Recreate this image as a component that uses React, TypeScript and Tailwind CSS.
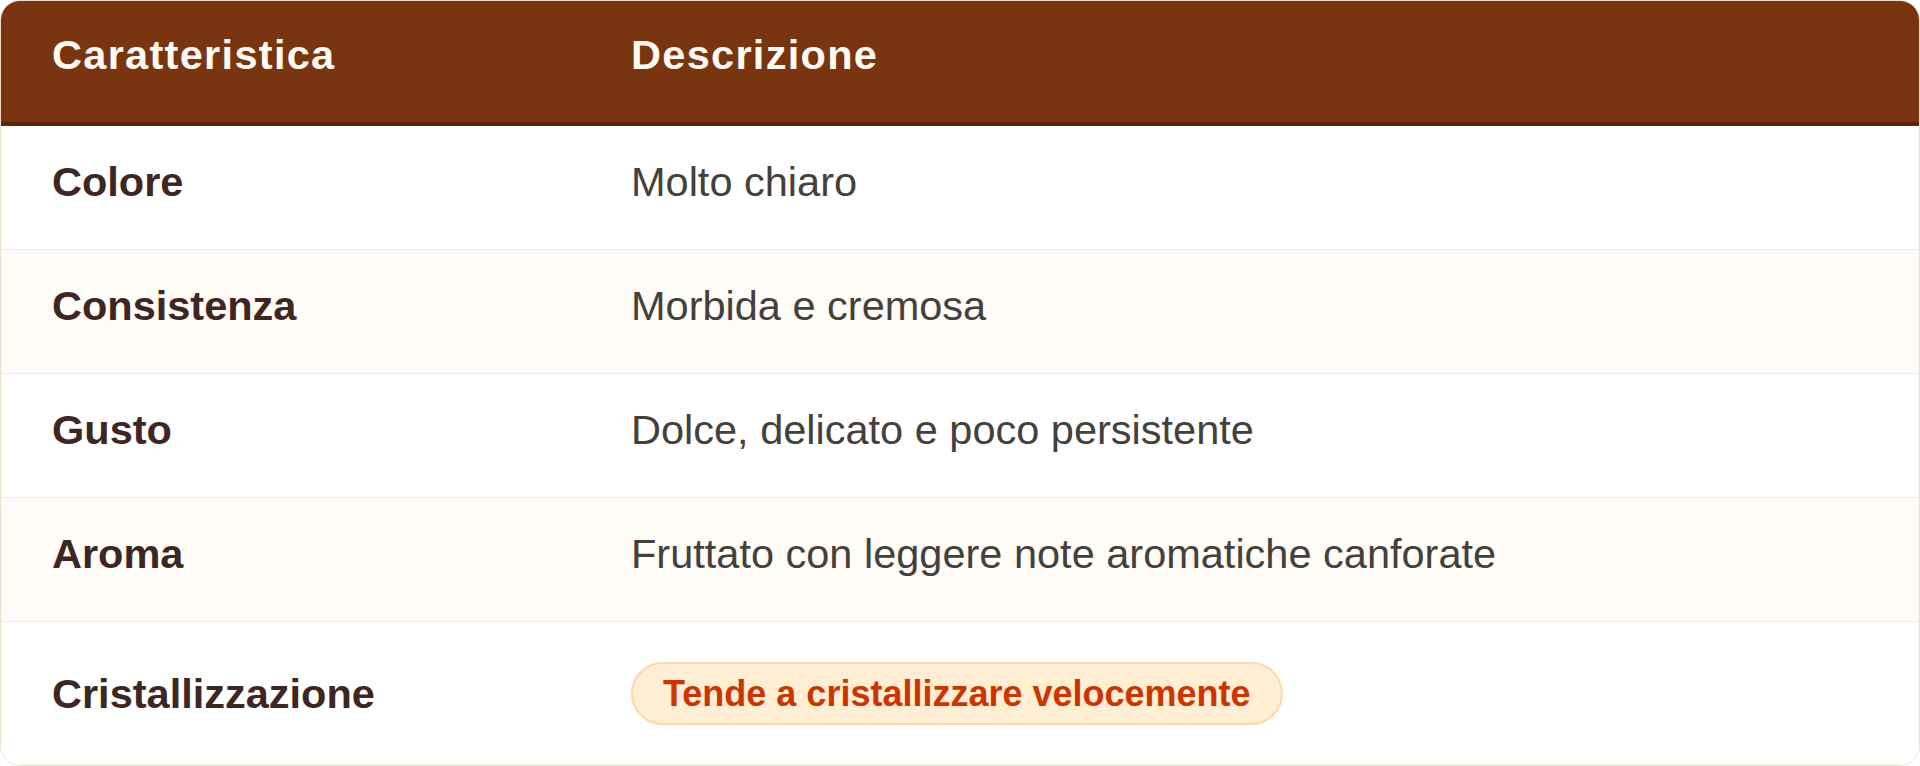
import React from 'react';

interface Row {
    label: string;
    value: string;
    badge?: boolean;
}

const rows: Row[] = [
    { label: 'Colore', value: 'Molto chiaro' },
    { label: 'Consistenza', value: 'Morbida e cremosa' },
    { label: 'Gusto', value: 'Dolce, delicato e poco persistente' },
    { label: 'Aroma', value: 'Fruttato con leggere note aromatiche canforate' },
    { label: 'Cristallizzazione', value: 'Tende a cristallizzare velocemente', badge: true },
];

export default function App() {
    return (
        <div className="w-[1920px] h-[766px] bg-white font-['Liberation_Sans',Arial,sans-serif]">
            <div className="h-full rounded-[20px] border border-[#ecdfcd] overflow-hidden bg-white">
                <table className="w-full table-fixed border-collapse">
                    <colgroup>
                        <col className="w-[580px]" />
                        <col />
                    </colgroup>
                    <thead>
                        <tr className="bg-[#78350f] border-b-4 border-[#5c2609]">
                            <th className="text-left px-[51px] pt-[30px] pb-[43px] text-[41.5px] leading-[48px] font-bold tracking-[1.3px] text-[#fffaf3]">
                                Caratteristica
                            </th>
                            <th className="text-left pl-[50px] pr-[51px] pt-[30px] pb-[43px] text-[41.5px] leading-[48px] font-bold tracking-[1.3px] text-[#fffaf3]">
                                Descrizione
                            </th>
                        </tr>
                    </thead>
                    <tbody>
                        {rows.map((row, i) => (
                            <tr
                                key={row.label}
                                className={`${i % 2 === 1 ? 'bg-[#fffbf7]' : 'bg-white'} ${
                                    i < rows.length - 1 ? 'border-b border-[#f1e7dc]' : ''
                                }`}
                            >
                                <td
                                    className={`px-[51px] ${
                                        row.badge ? 'pt-[40px] pb-[40px]' : 'pt-[32px] pb-[43px]'
                                    } text-[41.5px] leading-[48px] font-bold text-[#3e2723] align-middle`}
                                >
                                    {row.label}
                                </td>
                                <td
                                    className={`pl-[50px] pr-[51px] ${
                                        row.badge ? 'pt-[40px] pb-[40px]' : 'pt-[32px] pb-[43px]'
                                    } text-[41.5px] leading-[48px] text-stone-700 align-middle`}
                                >
                                    {row.badge ? (
                                        <span className="inline-block align-middle rounded-full border-2 border-orange-200 bg-orange-100 px-[30px] py-[10px] text-[36px] leading-[39px] font-bold text-orange-700">
                                            {row.value}
                                        </span>
                                    ) : (
                                        row.value
                                    )}
                                </td>
                            </tr>
                        ))}
                    </tbody>
                </table>
            </div>
        </div>
    );
}
